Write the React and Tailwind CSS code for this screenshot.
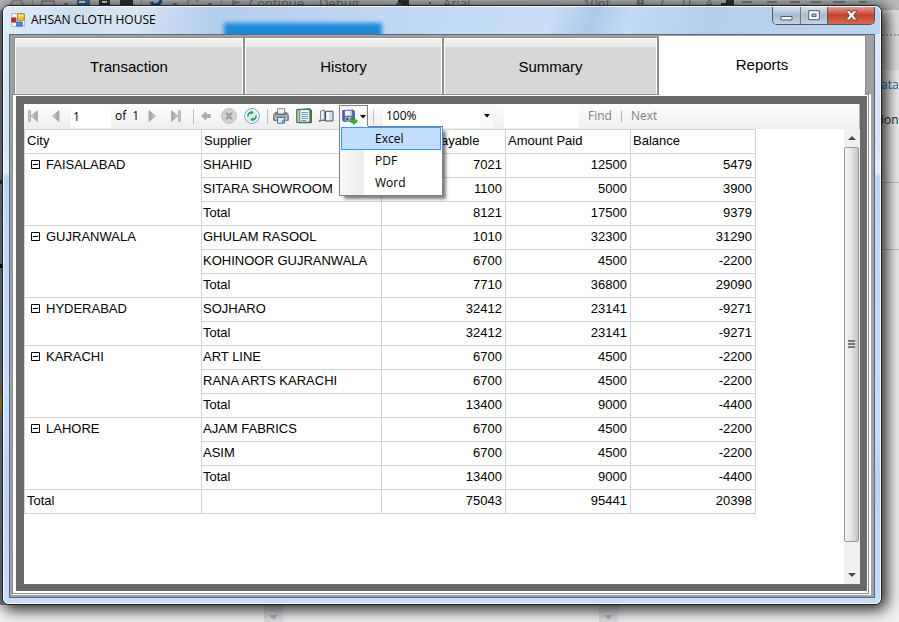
import React from "react";

const ARIAL = "font-['Liberation_Sans',Arial,sans-serif]";
const SEGOE = "font-['Open_Sans','Noto_Sans',sans-serif]";

const groups = [
  { city: "FAISALABAD", rows: [["SHAHID", 7021, 12500, 5479], ["SITARA SHOWROOM", 1100, 5000, 3900], ["Total", 8121, 17500, 9379]] },
  { city: "GUJRANWALA", rows: [["GHULAM RASOOL", 1010, 32300, 31290], ["KOHINOOR GUJRANWALA", 6700, 4500, -2200], ["Total", 7710, 36800, 29090]] },
  { city: "HYDERABAD", rows: [["SOJHARO", 32412, 23141, -9271], ["Total", 32412, 23141, -9271]] },
  { city: "KARACHI", rows: [["ART LINE", 6700, 4500, -2200], ["RANA ARTS KARACHI", 6700, 4500, -2200], ["Total", 13400, 9000, -4400]] },
  { city: "LAHORE", rows: [["AJAM FABRICS", 6700, 4500, -2200], ["ASIM", 6700, 4500, -2200], ["Total", 13400, 9000, -4400]] },
];

function Arrow({ flip, bar }) {
  return (
    <svg width="12" height="14" viewBox="0 0 12 14" className={flip ? "-scale-x-100" : ""} aria-hidden="true">
      <defs>
        <linearGradient id="arrowFill" x1="0" x2="1">
          <stop offset="0" stopColor="#cfcfcf" />
          <stop offset="1" stopColor="#9d9d9d" />
        </linearGradient>
      </defs>
      {bar && <path d="M1.5 1.5h2v11h-2z" fill="#c4c4c4" stroke="#a4a4a4" strokeWidth=".7" />}
      <path d={bar ? "M10.5 1.5v11L4 7z" : "M9 1.5v11L2.5 7z"} fill="url(#arrowFill)" stroke="#a8a8a8" strokeWidth=".7" />
    </svg>
  );
}

function BackIcon() {
  return (
    <svg width="10" height="10" viewBox="0 0 10 10" aria-hidden="true">
      <path d="M.6 5 4.8 1v2.5h4.4v3H4.8V9z" fill="#b0b0b0" stroke="#999" strokeWidth=".7" />
    </svg>
  );
}

function StopIcon() {
  return (
    <svg width="16" height="16" viewBox="0 0 16 16" aria-hidden="true">
      <circle cx="8" cy="8" r="7.4" fill="#d3d3d3" stroke="#bdbdbd" />
      <path d="M4.6 5h2.2L8 6.4 9.2 5h2.2L9.3 8l2.1 3H9.2L8 9.6 6.8 11H4.6l2.1-3z" fill="#a4a4a4" stroke="#8f8f8f" strokeWidth=".6" />
    </svg>
  );
}

function RefreshIcon() {
  return (
    <svg width="16" height="16" viewBox="0 0 16 16" aria-hidden="true">
      <circle cx="8" cy="8" r="7.4" fill="#d8e9fa" stroke="#6f9ccb" />
      <circle cx="8" cy="8" r="6.3" fill="none" stroke="#f6fbff" />
      <path d="M4 8.4C3.8 6 5 4.6 7.2 4.5" fill="none" stroke="#2c9a3a" strokeWidth="1.5" />
      <path d="M6.6 2.2 9.6 4.5 6.6 6.8z" fill="#2c9a3a" />
      <path d="M12 7.6c.2 2.400-1 3.800-3.200 3.900" fill="none" stroke="#2c9a3a" strokeWidth="1.5" />
      <path d="M9.400 9.200 6.400 11.500 9.400 13.800z" fill="#2c9a3a" />
    </svg>
  );
}

function PrintIcon() {
  return (
    <svg width="16" height="16" viewBox="0 0 16 16" aria-hidden="true">
      <path d="M4.500.700h7V6h-7z" fill="#eef3f8" stroke="#7c858f" />
      <path d="M2.600 4.200h1.300v2h8.200v-2h1.300l2 3v5.200H.6V7.200z" fill="#868a90" stroke="#55595f" strokeWidth=".7" />
      <path d="M1.200 7.700h13.600M1.200 9h13.600" stroke="#b9bdc2" strokeWidth=".8" />
      <path d="M2 9.800h1.600v1.600H2zM12.400 9.800H14v1.600h-1.600z" fill="#e6e9eb" />
      <path d="M4.500 9.500h7v5.800h-7z" fill="#dcebf7" stroke="#647383" />
      <path d="M9 12.200l2-1v3.600H8z" fill="#5a9fd6" />
    </svg>
  );
}

function LayoutIcon() {
  return (
    <svg width="16" height="16" viewBox="0 0 16 16" aria-hidden="true">
      <path d="M.8 1.500 14 .8 15.300 2v12.700H.8z" fill="#377c41" stroke="#285d32" />
      <path d="M1.300 2h2v12.300h-2z" fill="#b3d8ad" />
      <path d="M4 2h9.300v11.800H4z" fill="#f7fafc" stroke="#9caeb8" strokeWidth=".6" />
      <path d="M5.300 4.500h6.800M5.300 6.500h6.800M5.300 8.500h6.800M5.300 10.500h6.800M5.300 12.500h5" stroke="#6285b0" strokeWidth=".9" />
    </svg>
  );
}

function PageSetupIcon() {
  return (
    <svg width="16" height="16" viewBox="0 0 16 16" aria-hidden="true">
      <path d="M2.500 3 6.500 2v9.500L1 13.500 2.500 11z" fill="#e2e6eb" stroke="#7b8794" />
      <path d="M4.600 3.500v8" stroke="#fff" />
      <path d="M7.500 3.300h7.500v9.700H7.500z" fill="#cfdff0" stroke="#4a5460" />
      <path d="M8.500 4.300H11v7.700H8.500z" fill="#f7fafd" />
      <path d="M1 13.500c2-1.500 4-2 6.500-.5" fill="none" stroke="#515d69" />
    </svg>
  );
}

function SaveIcon() {
  return (
    <svg width="16" height="16" viewBox="0 0 16 16" aria-hidden="true">
      <path d="M.7 1.600 11 1l1.400 1.200v9.200L1.800 12.400.7 11.200z" fill="#6068c0" stroke="#3b3f8d" strokeWidth=".8" />
      <path d="M3 1.700h7v5H3z" fill="#f2f5fb" />
      <path d="M8.200 1.700H10v5H8.200z" fill="#b9c1e6" />
      <path d="M3.400 8.200h6v3.900h-6z" fill="#d1d4e0" />
      <path d="M4.300 8.800h2v2.800h-2z" fill="#2f3477" />
      <path d="M8.300 9.500l2.700 1V8.200l4.400 4-3.900 3.400-.3-2-2.700-.4-1-1.700z" fill="#36b536" stroke="#14801e" strokeWidth=".7" />
    </svg>
  );
}

function Divider() {
  return <span className="h-[15px] w-px shrink-0 bg-[#bdbdbd]" />;
}

function AppIcon() {
  return (
    <svg width="14" height="14" viewBox="0 0 14 14" aria-hidden="true">
      <path d="M.5.5h13v13H.5z" fill="#eef1f5" stroke="#b5b9bf" />
      <path d="M6.500.9h6.800v6.400H6.500z" fill="#f5bd25" stroke="#a9730c" strokeWidth=".8" />
      <path d="M7.200 1.600h5.200v1.800H7.200z" fill="#fde58f" />
      <path d="M.9 4.900h4v4.200h-4z" fill="#cf2f1c" stroke="#8b1c12" strokeWidth=".8" />
      <path d="M5.700 9h5.500v4H5.700z" fill="#5290e6" stroke="#2553a8" strokeWidth=".8" />
    </svg>
  );
}

function Desktop() {
  return (
    <div className={`absolute inset-0 flex flex-col overflow-hidden bg-[#f1f1f1] text-[13px] text-[#444] ${SEGOE}`} aria-hidden="true">
      <div className="flex h-[10px] shrink-0 items-end bg-[#bcbcbe] leading-[13px] text-[#707070]">
        <svg width="249" height="10" viewBox="0 0 249 10" className="shrink-0">
          <path d="M11 5c0-7 12-7 12 0M42 5V1h12v4M188 4c-3-5 9-7 10-2" fill="none" stroke="#8e8e90" strokeWidth="2" />
          <path d="M77 0h13v5H77z" fill="#3d6f94" />
          <path d="M79 1h6v2h-6z" fill="#dfe8f0" />
          <path d="M99 0h11v5H99zM120 0h13v5h-13z" fill="#333" />
          <path d="M102 1h5v2h-5z" fill="#ddd" />
          <path d="M151 2c2 4 9 4 10-2" fill="none" stroke="#175a9c" strokeWidth="3" />
          <path d="M63 3h6l-3 3zM172 3h6l-3 3zM207 3h6l-3 3z" fill="#777" />
          <path d="M32.500 0v5M141.500 0v5M221.500 0v5" stroke="#999" />
          <path d="M232 0l9 2-9 4z" fill="#8a8a8c" />
        </svg>
        <span className="w-[70px] shrink-0">Continue</span>
        <span className="w-[76px] shrink-0">Debug</span>
        <svg width="48" height="10" viewBox="0 0 48 10" className="shrink-0">
          <path d="M3 0h11v5H3z" fill="#333" />
          <path d="M1 3h5v3H1z" fill="#3d6f94" />
          <path d="M34 2h2v2h-2z" fill="#666" />
        </svg>
        <span className="w-[140px] shrink-0">Arial</span>
        <span className="w-[53px] shrink-0">10pt</span>
        <span className="w-6 shrink-0 font-bold">B</span>
        <span className="w-[22px] shrink-0 italic">I</span>
        <span className="w-[23px] shrink-0 underline">U</span>
        <span className="w-4 shrink-0">A</span>
        <svg width="160" height="10" viewBox="0 0 160 10" className="shrink-0">
          <path d="M0 3h5V0h8v5H0z" fill="#333" />
          <path d="M21 2h10M46 2h10M69 2h10M90 2h10M112 2h12M138 2h8" stroke="#858585" strokeWidth="2" />
        </svg>
      </div>
      <div className="flex flex-1 justify-between">
        <div className="flex w-2 flex-col bg-[#858789] pt-[170px]">
          <span className="h-1 bg-[#30363c]" />
          <span className="mt-20 h-1 bg-black" />
          <span className="mt-32 h-4 bg-[#b98e3f]" />
        </div>
        <div className="flex w-5 flex-col">
          <div className="h-[60px] w-full bg-[#e3e3e3] pt-6">
            <div className="border-t-2 border-dotted border-[#aaa]" />
          </div>
          <span className="mt-[6px] pl-[2px] text-[12px] leading-[18px] text-[#1d6fb5]">ata</span>
          <span className="mt-[17px] pl-[2px] text-[12px] leading-[18px] text-[#222]">ion</span>
          <span className="mt-[53px] h-px w-full bg-[#c5c5b4]" />
          <span className="mt-[66px] h-px w-full bg-[#c5c5b4]" />
        </div>
      </div>
      <div className="flex h-[17px] shrink-0 gap-[315px] pl-[264px]">
        {[0, 1].map((n) => (
          <span key={n} className="flex w-5 items-end justify-center border-r-2 border-[#e6e6ea] bg-[#dedee3] pb-[2px]">
            <svg width="9" height="5" viewBox="0 0 9 5"><path d="M0 0h9L4.500 5z" fill="#b4b4bc" /></svg>
          </span>
        ))}
      </div>
    </div>
  );
}

function WindowButtons() {
  return (
    <div className="-mt-px mr-[5px] flex h-[19px] overflow-hidden rounded-b-[5px] border border-t-0 border-[#4a5768]">
      <button aria-label="Minimize" className="flex w-7 items-center justify-center border-r border-[#6b7b90] bg-linear-to-b from-[#dbe5f0] from-0% via-[#a9bbd0] via-50% to-[#c3d4e8]">
        <svg width="13" height="12" viewBox="0 0 13 12"><path d="M1 7.500h11v3.500H1z" fill="#fff" stroke="#525866" /></svg>
      </button>
      <button aria-label="Maximize" className="flex w-[27px] items-center justify-center border-r border-[#5a5560] bg-linear-to-b from-[#dbe5f0] from-0% via-[#a9bbd0] via-50% to-[#c3d4e8]">
        <svg width="12" height="11" viewBox="0 0 12 11"><path d="M.7.700h10.600v9H.7z" fill="#fff" stroke="#525866" /><path d="M4 4h4v2.600H4z" fill="#a9bfd8" stroke="#525866" /></svg>
      </button>
      <button aria-label="Close" className="flex w-[46px] items-center justify-center bg-linear-to-b from-[#e2a79b] from-0% via-[#c4402a] via-50% to-[#d9694c]">
        <svg width="13" height="11" viewBox="0 0 13 11"><path d="M1 .700h3.500l2 2.500 2-2.500H12L8.600 5.300 12 10H8.500l-2-2.600-2 2.600H1l3.400-4.700z" fill="#fff" stroke="#5b4750" strokeWidth=".9" /></svg>
      </button>
    </div>
  );
}

function ExportMenu() {
  return (
    <div className="relative ml-[5px] self-stretch pt-px">
      <button aria-label="Export" aria-haspopup="menu" className="flex h-6 w-[29px] items-center gap-[2px] border border-[#808080] border-b-transparent bg-[#f8f8f8] pl-[2px]">
        <SaveIcon />
        <svg width="6" height="4" viewBox="0 0 6 4" aria-hidden="true"><path d="M0 0h6L3 3.500z" fill="#000" /></svg>
      </button>
      <div role="menu" className={`absolute left-0 top-[22px] z-10 w-[104px] border border-t-0 border-[#808080] bg-[linear-gradient(90deg,#f8f8f8_0,#ececec_24px,#fff_24px)] px-px pb-px text-[12px] shadow-[4px_4px_3px_-1px_rgba(0,0,0,0.5)] ${SEGOE}`}>
        <div className="-mr-[2px] ml-[27px] h-px bg-[#808080]" />
        <button role="menuitem" className="block h-[23px] w-full border border-[#3399ff] bg-[#c2dfff] pl-[33px] text-left leading-[21px]">Excel</button>
        <button role="menuitem" className="block h-[22px] w-full pl-[34px] text-left leading-5">PDF</button>
        <button role="menuitem" className="block h-[22px] w-full pl-[34px] text-left leading-5">Word</button>
      </div>
    </div>
  );
}

function Toolbar() {
  return (
    <div className={`flex h-[25px] shrink-0 items-center border-r border-[#b5b5b5] bg-linear-to-b from-[#fdfdfd] to-[#eeeeee] pb-px pl-[3px] text-[12px] text-black ${SEGOE}`}>
      <button aria-label="First page"><Arrow bar /></button>
      <button aria-label="Previous page" className="ml-[11px]"><Arrow /></button>
      <input aria-label="Current page" defaultValue="1" className="ml-[9px] h-6 w-10 bg-white pl-[2px] outline-none" />
      <span className="ml-1 flex w-[31px] gap-[6px]"><span>of</span><span>1</span></span>
      <button aria-label="Next page"><Arrow flip /></button>
      <button aria-label="Last page" className="ml-[12px]"><Arrow flip bar /></button>
      <span className="ml-[11px] flex"><Divider /></span>
      <button aria-label="Back" className="ml-[7px]"><BackIcon /></button>
      <button aria-label="Stop" className="ml-[10px]"><StopIcon /></button>
      <button aria-label="Refresh" className="ml-[7px] mr-[7px]"><RefreshIcon /></button>
      <Divider />
      <button aria-label="Print" className="ml-[5px]"><PrintIcon /></button>
      <button aria-label="Print layout" className="ml-[7px]"><LayoutIcon /></button>
      <button aria-label="Page setup" className="ml-[6px]"><PageSetupIcon /></button>
      <ExportMenu />
      <span className="ml-[5px] flex"><Divider /></span>
      <div className="relative ml-[9px] flex h-6 w-[110px] items-center bg-white">
        <select aria-label="Zoom" className="h-6 w-full appearance-none bg-transparent pl-[3px] outline-none">
          <option>100%</option>
        </select>
        <span className="pointer-events-none absolute right-0 flex h-6 w-[13px] items-center justify-center bg-[#f9f9f9]">
          <svg width="6" height="4" viewBox="0 0 6 4" aria-hidden="true"><path d="M0 0h6L3 3.500z" fill="#000" /></svg>
        </span>
      </div>
      <input aria-label="Find text" className="ml-[11px] h-6 w-[75px] bg-white outline-none" />
      <button className="ml-[9px] text-[#808080]">Find</button>
      <span className="mx-[9px] h-[11px] w-px bg-[#b0b0b0]" />
      <button className="text-[#808080]">Next</button>
    </div>
  );
}

const cell = "h-6 border border-[#d3d3d3] pl-[2px] pr-0 py-0 text-left align-top font-normal leading-[22px] whitespace-nowrap";
const textCell = "h-6 border border-[#d3d3d3] px-px py-0 text-left align-top font-normal leading-[22px] whitespace-nowrap";
const num = "h-6 border border-[#d3d3d3] pl-0 pr-[3px] py-0 text-right align-top leading-[22px]";

function Report() {
  return (
    <table className={`w-[732px] table-fixed border-collapse text-[13px] text-black ${ARIAL}`}>
      <colgroup>
        <col className="w-[177px]" /><col className="w-[180px]" /><col className="w-[124px]" /><col className="w-[125px]" /><col className="w-[125px]" />
      </colgroup>
      <thead>
        <tr>
          {["City", "Supplier", "Amount Payable", "Amount Paid", "Balance"].map((h) => <th key={h} scope="col" className={cell}>{h}</th>)}
        </tr>
      </thead>
      <tbody>
        {groups.map((g) => g.rows.map((r, i) => (
          <tr key={g.city + r[0]}>
            {i === 0 && (
              <th scope="rowgroup" rowSpan={g.rows.length} className={cell}>
                <div className="flex items-center gap-[6px] pl-1">
                  <button aria-label={`Collapse ${g.city}`} className="pb-px">
                    <svg width="9" height="9" viewBox="0 0 9 9" className="block"><path d="M.5.5h8v8h-8zM2 4.500h5" fill="none" stroke="#000" /></svg>
                  </button>
                  {g.city}
                </div>
              </th>
            )}
            <td className={textCell}>{r[0]}</td>
            <td className={num}>{r[1]}</td>
            <td className={num}>{r[2]}</td>
            <td className={num}>{r[3]}</td>
          </tr>
        )))}
        <tr>
          <th scope="row" className={cell}>Total</th>
          <td className={cell} />
          <td className={num}>75043</td>
          <td className={num}>95441</td>
          <td className={num}>20398</td>
        </tr>
      </tbody>
    </table>
  );
}

function Scrollbar() {
  return (
    <div className="flex w-4 shrink-0 flex-col bg-[#f0f0f0]">
      <button aria-label="Scroll up" className="flex h-[18px] items-center justify-center">
        <svg width="8" height="4" viewBox="0 0 8 4"><path d="M0 4h8L4 0z" fill="#4a4a4a" /></svg>
      </button>
      <div className="mr-px flex flex-1 items-center justify-center rounded-[2px] border border-[#979797] bg-linear-to-r from-[#f5f5f5] from-0% via-[#e6e6e8] via-45% to-[#c4c4ca]">
        <svg width="8" height="9" viewBox="0 0 8 9"><path d="M0 1h7M0 4h7M0 7h7" stroke="#555" strokeWidth="1.500" /></svg>
      </div>
      <button aria-label="Scroll down" className="flex h-[42px] items-end justify-center pb-[7px]">
        <svg width="8" height="4" viewBox="0 0 8 4"><path d="M0 0h8L4 4z" fill="#4a4a4a" /></svg>
      </button>
    </div>
  );
}

const tab = "border border-b-0 border-[#8c8e97] bg-[linear-gradient(#f3f3f3_0,#e8e8e8_9px,#d7d7d7_9px,#d7d7d7_100%)] shadow-[inset_1px_1px_0_#fff,inset_-1px_0_0_#fff] mt-px mb-px pt-[2px]";

export default function App() {
  return (
    <div className="relative isolate flex h-screen min-h-[560px] pb-[17px] pl-[2px] pr-[17px] pt-[5px]">
      <Desktop />
      <main className="relative flex min-w-0 flex-1 flex-col rounded-[7px] border border-[#1c2531] bg-[#c3dbf6] shadow-[3px_3px_15px_2px_rgba(0,0,0,0.85)]">
        <div className="flex min-h-0 flex-1 flex-col rounded-[6px] border border-white/80 bg-[linear-gradient(180deg,#dfeaf7_0,#d2e3f6_140px,#e3effa_165px,#b9d7f2_170px,#c6ddf7_420px,#b9d2ee_470px,#c7ddf7_100%)] px-[5px] pb-[5px]">
          <header className="relative -mx-[5px] flex h-[27px] shrink-0 justify-between overflow-hidden rounded-t-[5px] bg-[linear-gradient(105deg,#e0edf9_0,#ccdff2_8%,#d9e6f4_15%,#b3cdec_24%,#c0d8f3_45%,#c8dff6_62%,#adc8e8_67%,#c3dbf5_71%,#b5cfea_80%,#bdd5ee_100%)]">
            <span className="absolute left-[220px] top-4 h-6 w-[158px] bg-[#1b88da] blur-[2px]" />
            <div className="relative -mt-px flex items-center gap-[6px] pl-[7px]">
              <AppIcon />
              <h1 className={`text-[12px] leading-4 text-black ${SEGOE}`}>AHSAN CLOTH HOUSE</h1>
            </div>
            <WindowButtons />
          </header>
          <div className="flex min-h-0 flex-1 flex-col border border-[#5c6a7d] bg-[#a0a0a0] pb-[2px] pl-[2px] pr-[3px] pt-px">
            <nav role="tablist" className={`z-10 -mb-px grid h-[59px] shrink-0 grid-cols-[230fr_199fr_215fr_208fr] pl-[2px] pr-[5px] text-[15px] text-black ${ARIAL}`}>
              <button role="tab" className={tab}>Transaction</button>
              <button role="tab" className={tab}>History</button>
              <button role="tab" className={tab}>Summary</button>
              <button role="tab" aria-selected="true" className="border-x border-[#8c8e97] bg-white">Reports</button>
            </nav>
            <section className="flex min-h-0 flex-1 flex-col border-b border-r-2 border-white">
              <div className="flex min-h-0 flex-1 flex-col border border-[#8c8e97] bg-white pb-[2px] pl-[3px] pr-px pt-px">
                <div className="flex min-h-0 flex-1 flex-col border-b-[7px] border-l-8 border-r-[7px] border-t-8 border-[#696969] bg-white">
                  <Toolbar />
                  <div className="flex min-h-0 flex-1">
                    <div className="min-w-0 flex-1 overflow-hidden"><Report /></div>
                    <Scrollbar />
                  </div>
                </div>
              </div>
            </section>
          </div>
        </div>
      </main>
    </div>
  );
}
